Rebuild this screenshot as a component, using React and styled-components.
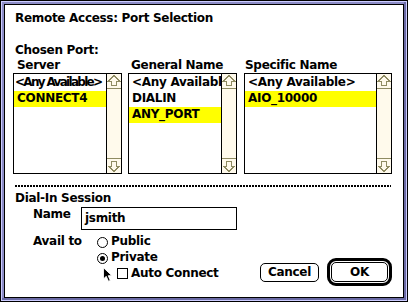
import React from 'react';
import styled, { createGlobalStyle } from 'styled-components';

const Global = createGlobalStyle`
  html, body { margin: 0; padding: 0; background: #fff; }
  body { width: 408px; height: 302px; overflow: hidden; }
`;

const FONT = `"DejaVu Sans", "Liberation Sans", sans-serif`;
const OLIVE = '#8f8b62';
const TRACK = '#fffaec';

const Window = styled.div`
  box-sizing: border-box;
  width: 408px;
  height: 302px;
  border: 1px solid #000;
  box-shadow:
    inset 0 0 0 1px #ccccff,
    inset -3px -3px 0 #6a6aa4,
    inset 0 0 0 3px #8c8cc6,
    inset 0 0 0 4px #000;
  background: #fff;
  padding: 10px 15px 0 14px;
  font-family: ${FONT};
  font-weight: bold;
  font-size: 12px;
  letter-spacing: -0.3px;
  color: #000;
  display: flex;
  flex-direction: column;
`;

const Label = styled.div`
  line-height: 14px;
  height: 14px;
  white-space: nowrap;
  margin-top: ${p => p.$mt || 0}px;
`;

const Columns = styled.div`
  display: flex;
  margin: 1px 0 0 -2px;
`;

const Column = styled.div`
  display: flex;
  flex-direction: column;
  width: ${p => p.$w}px;
  margin-right: ${p => p.$gap || 0}px;
`;

const ColHeader = styled.div`
  line-height: 14px;
  height: 14px;
  margin-bottom: 1px;
  padding-left: ${p => p.$indent}px;
  white-space: nowrap;
`;

const ListBox = styled.div`
  box-sizing: border-box;
  height: 101px;
  border: 1px solid #000;
  display: flex;
  background: #fff;
`;

const Rows = styled.div`
  flex: 1;
  min-width: 0;
  overflow: hidden;
  padding-top: 1px;
`;

const Row = styled.div`
  height: 16px;
  line-height: 14px;
  padding-left: ${p => (p.$squeeze ? 1 : 3)}px;
  white-space: nowrap;
  overflow: hidden;
  background: ${p => (p.$selected ? '#ffff00' : 'transparent')};
  letter-spacing: ${p => (p.$squeeze ? '-1.7px' : '-0.3px')};
`;

const ScrollBar = styled.div`
  flex: none;
  width: 14px;
  border-left: 1px solid #000;
  background: ${TRACK};
  display: flex;
  flex-direction: column;
`;

const ArrowBox = styled.div`
  height: 14px;
  ${p => (p.$down ? `border-top: 1px solid ${OLIVE};` : `border-bottom: 1px solid ${OLIVE};`)}
  display: flex;
  align-items: center;
  justify-content: center;
`;

const Track = styled.div`
  flex: 1;
`;

const Dotted = styled.div`
  margin-top: 11px;
  width: 376px;
  height: 2px;
  background: repeating-linear-gradient(90deg, #000 0 2px, transparent 2px 3px);
`;

const FieldRow = styled.div`
  display: flex;
  align-items: flex-start;
  margin-top: ${p => p.$mt}px;
`;

const RowLabel = styled.div`
  box-sizing: border-box;
  flex: none;
  width: ${p => p.$w}px;
  padding-left: 18px;
  line-height: 14px;
  white-space: nowrap;
`;

const TextField = styled.div`
  box-sizing: border-box;
  flex: none;
  width: 156px;
  height: 23px;
  border: 1px solid #000;
  padding: 3px 0 0 3px;
  line-height: 14px;
`;

const Options = styled.div`
  display: flex;
  flex-direction: column;
`;

const Option = styled.div`
  display: flex;
  align-items: flex-start;
  height: 16px;
  line-height: 14px;
  padding-left: ${p => p.$indent || 0}px;
  white-space: nowrap;
`;

const Radio = styled.span`
  box-sizing: border-box;
  flex: none;
  width: 11px;
  height: 11px;
  margin: 3px 3px 0 0;
  border: 1px solid #000;
  border-radius: 50%;
  display: flex;
  align-items: center;
  justify-content: center;
  &::after {
    content: '';
    width: 5px;
    height: 5px;
    border-radius: 50%;
    background: ${p => (p.$on ? '#000' : 'transparent')};
  }
`;

const Check = styled.span`
  box-sizing: border-box;
  flex: none;
  width: 11px;
  height: 11px;
  margin: 2px 3px 0 4px;
  border: 1px solid #000;
  background: #fff;
`;

const Cursor = styled.svg`
  display: block;
  flex: none;
  margin-top: 1px;
`;

const Buttons = styled.div`
  margin-left: auto;
  margin-top: 24px;
  display: flex;
  align-items: center;
  gap: 8px;
`;

const Button = styled.div`
  box-sizing: border-box;
  width: ${p => p.$w}px;
  height: ${p => p.$h}px;
  border: 1px solid #000;
  border-radius: 5px;
  display: flex;
  align-items: center;
  justify-content: center;
  line-height: 14px;
  background: #fff;
`;

const DefaultRing = styled.div`
  box-sizing: border-box;
  width: 65px;
  height: 28px;
  border: 3px solid #000;
  border-radius: 9px;
  padding: 1px;
`;

const Arrow = ({ down }) => (
  <svg width="14" height="14" viewBox="0 0 14 14" shapeRendering="crispEdges">
    <path
      d={down
        ? 'M7 12.5 L12.5 7 H9.5 V2.5 H4.5 V7 H1.5 Z'
        : 'M7 1.5 L12.5 7 H9.5 V11.5 H4.5 V7 H1.5 Z'}
      fill="none"
      stroke={OLIVE}
      strokeWidth="1"
    />
  </svg>
);

const List = ({ items, selected, squeezeFirst }) => (
  <ListBox>
    <Rows>
      {items.map((t, i) => (
        <Row key={t} $selected={i === selected} $squeeze={squeezeFirst && i === 0}>
          {t}
        </Row>
      ))}
    </Rows>
    <ScrollBar>
      <ArrowBox><Arrow /></ArrowBox>
      <Track />
      <ArrowBox $down><Arrow down /></ArrowBox>
    </ScrollBar>
  </ListBox>
);

const columns = [
  { title: 'Server', w: 109, gap: 6, indent: 4, items: ['<Any Available>', 'CONNECT4'], selected: 1, squeeze: true },
  { title: 'General Name', w: 109, gap: 7, indent: 3, items: ['<Any Available>', 'DIALIN', 'ANY_PORT'], selected: 2 },
  { title: 'Specific Name', w: 148, gap: 0, indent: 1, items: ['<Any Available>', 'AIO_10000'], selected: 1 },
];

export default function App() {
  return (
    <>
      <Global />
      <Window>
        <Label>Remote Access: Port Selection</Label>
        <Label $mt={18}>Chosen Port:</Label>
        <Columns>
          {columns.map(c => (
            <Column key={c.title} $w={c.w} $gap={c.gap}>
              <ColHeader $indent={c.indent}>{c.title}</ColHeader>
              <List items={c.items} selected={c.selected} squeezeFirst={c.squeeze} />
            </Column>
          ))}
        </Columns>
        <Dotted />
        <Label $mt={4}>Dial-In Session</Label>
        <FieldRow $mt={2}>
          <RowLabel $w={66}>Name</RowLabel>
          <TextField>jsmith</TextField>
        </FieldRow>
        <FieldRow $mt={4}>
          <RowLabel $w={82}>Avail to</RowLabel>
          <Options>
            <Option><Radio />Public</Option>
            <Option><Radio $on />Private</Option>
            <Option $indent={6}>
              <Cursor width="10" height="15" viewBox="0 0 11 16">
                <path d="M0.5 0.5 V13 L3.5 10 L6 15.5 L8 14.5 L5.8 9.3 H9.8 Z" fill="#000" stroke="#fff" strokeWidth="1" />
              </Cursor>
              <Check />
              Auto Connect
            </Option>
          </Options>
          <Buttons>
            <Button $w={59} $h={19}>Cancel</Button>
            <DefaultRing>
              <Button $w={57} $h={20}>OK</Button>
            </DefaultRing>
          </Buttons>
        </FieldRow>
      </Window>
    </>
  );
}
